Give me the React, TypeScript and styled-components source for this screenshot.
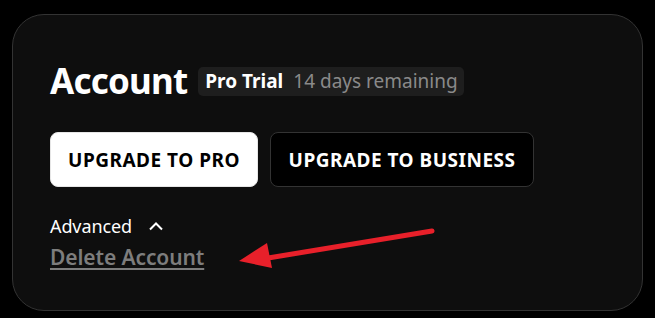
import React from "react";
import styled, { createGlobalStyle } from "styled-components";

const GlobalStyle = createGlobalStyle`
  html, body {
    margin: 0;
    padding: 0;
    background: #000000;
    font-family: "Noto Sans", "Open Sans", sans-serif;
  }
`;

const Page = styled.div`
  width: 655px;
  height: 318px;
  padding: 14px 12px 7px 12px;
  box-sizing: border-box;
  position: relative;
`;

const Card = styled.section`
  width: 631px;
  height: 297px;
  box-sizing: border-box;
  background-color: #0e0e0e;
  border: 1px solid #333333;
  border-radius: 32px;
  padding: 46px 37px 0 37px;
  display: flex;
  flex-direction: column;
`;

const HeaderRow = styled.div`
  display: flex;
  align-items: center;
  gap: 11px;
`;

const Title = styled.h1`
  margin: 0;
  font-size: 35px;
  font-weight: 700;
  line-height: 40px;
  letter-spacing: -0.8px;
  color: #ffffff;
`;

const Badge = styled.div`
  display: flex;
  align-items: center;
  gap: 10px;
  height: 29px;
  padding: 0 6px 0 7px;
  border-radius: 5px;
  background-color: #1e1e1e;
  font-size: 19px;
`;

const BadgeLabel = styled.span`
  font-weight: 700;
  color: #ffffff;
`;

const BadgeNote = styled.span`
  color: #8a8a8a;
`;

const ButtonRow = styled.div`
  display: flex;
  gap: 12px;
  margin-top: 31px;
`;

const UpgradeButton = styled.button<{ $primary?: boolean }>`
  height: 55px;
  padding: 0;
  box-sizing: border-box;
  border-radius: 8px;
  border: 1px solid ${(p) => (p.$primary ? "#e6e6e6" : "#333333")};
  background-color: ${(p) => (p.$primary ? "#ffffff" : "#000000")};
  color: ${(p) => (p.$primary ? "#000000" : "#ffffff")};
  font-family: inherit;
  font-size: 19px;
  font-weight: 700;
  letter-spacing: 0.5px;
  cursor: pointer;
`;

const AdvancedToggle = styled.div`
  display: flex;
  align-items: center;
  gap: 16px;
  margin-top: 27px;
  font-size: 18px;
  color: #ffffff;
  letter-spacing: -0.1px;
`;

const DeleteLink = styled.a`
  margin-top: 5px;
  align-self: flex-start;
  font-size: 21px;
  font-weight: 600;
  color: #7d7d7d;
  text-decoration: underline;
  text-underline-offset: 3px;
  letter-spacing: -0.1px;
  cursor: pointer;
`;

const Annotation = styled.svg`
  position: absolute;
  left: 0;
  top: 0;
  pointer-events: none;
`;

function App() {
  return (
    <Page>
      <GlobalStyle />
      <Card>
        <HeaderRow>
          <Title>Account</Title>
          <Badge>
            <BadgeLabel>Pro Trial</BadgeLabel>
            <BadgeNote>14 days remaining</BadgeNote>
          </Badge>
        </HeaderRow>
        <ButtonRow>
          <UpgradeButton $primary style={{ width: 208 }}>
            UPGRADE TO PRO
          </UpgradeButton>
          <UpgradeButton style={{ width: 264 }}>UPGRADE TO BUSINESS</UpgradeButton>
        </ButtonRow>
        <AdvancedToggle>
          Advanced
          <svg width="16" height="10" viewBox="0 0 16 10">
            <path d="M2 8.5 L8 2.5 L14 8.5" fill="none" stroke="#ffffff" strokeWidth="2" />
          </svg>
        </AdvancedToggle>
        <DeleteLink>Delete Account</DeleteLink>
      </Card>
      <Annotation width="655" height="318">
        <line x1="432" y1="231" x2="262" y2="259" stroke="#e8202a" strokeWidth="5" strokeLinecap="round" />
        <polygon points="239,261 267,243 272,268" fill="#e8202a" />
      </Annotation>
    </Page>
  );
}

export default App;
